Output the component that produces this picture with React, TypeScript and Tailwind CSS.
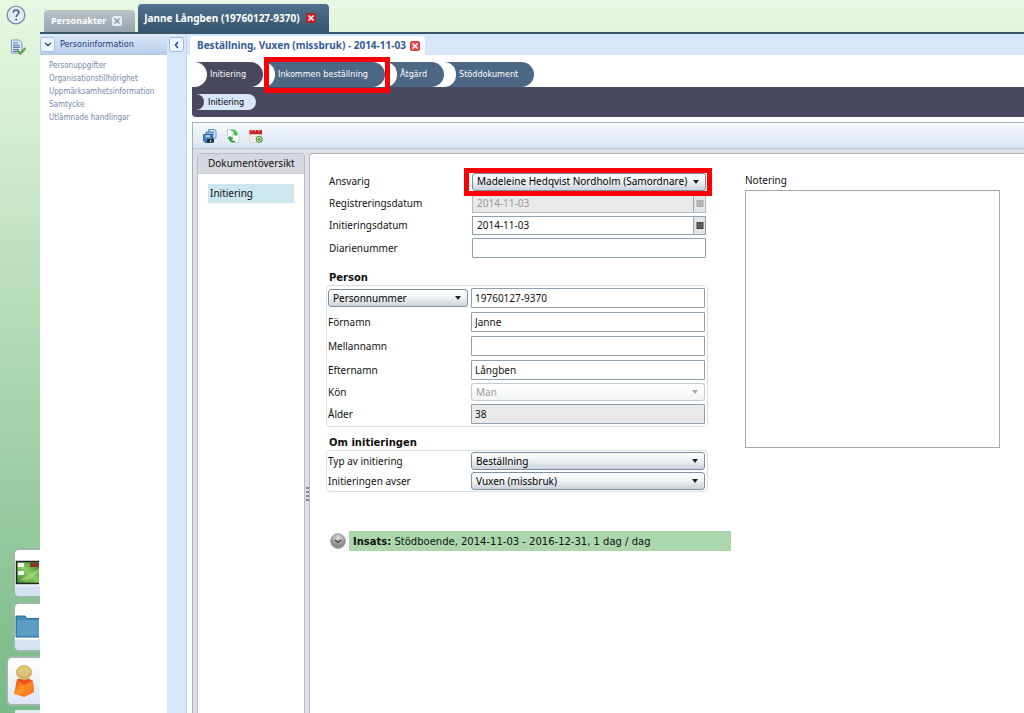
import type { ReactNode } from 'react';

const UI = "font-['DejaVu_Sans_Condensed','DejaVu_Sans',sans-serif]";

function CloseIcon({ cross, fill, stroke }: { cross: string; fill: string; stroke: string }) {
  return (
    <svg viewBox="0 0 10 10" className="size-[10px]" aria-hidden="true">
      <rect x=".5" y=".5" width="9" height="9" rx="1.5" fill={fill} stroke={stroke} />
      <path d="M2.500 2.500l5 5M7.500 2.500l-5 5" stroke={cross} strokeWidth="1.500" />
    </svg>
  );
}

function HelpIcon() {
  return (
    <svg viewBox="0 0 20 20" className="size-5" aria-hidden="true">
      <circle cx="10" cy="10" r="8.8" fill="#e3edf3" stroke="#7a8aad" strokeWidth="1.3" />
      <path d="M7.2 7.6C7.4 5.8 8.5 5 10 5c1.700 0 2.900.9 2.900 2.400 0 2-2.700 2.300-2.700 4.600" fill="none" stroke="#4a5b80" strokeWidth="1.500" />
      <circle cx="10.200" cy="14.400" r="1" fill="#4a5b80" />
    </svg>
  );
}

function ChecklistIcon() {
  return (
    <svg viewBox="0 0 16 16" className="size-4" aria-hidden="true">
      <path d="M1.500 1h7.500l3 3v10H1.500z" fill="#dfe9f5" stroke="#8296b5" />
      <path d="M3 4h5M3 6.200h7M3 8.400h7M3 10.600h6M3 12.500h4" stroke="#4f78b4" strokeWidth="1.100" />
      <path d="M7.500 11.500l3 3L15.500 9" fill="none" stroke="#5da653" strokeWidth="2.400" />
    </svg>
  );
}

function SaveAllIcon() {
  return (
    <svg viewBox="0 0 14 14" className="size-[14px]" aria-hidden="true">
      <path d="M5.500.5h6l1.500 1.500v7H5.500z" fill="#dceafa" stroke="#5584b8" strokeWidth=".9" />
      <path d="M7 1h4v2.500H7z" fill="#fff" stroke="#7ba3d0" strokeWidth=".6" />
      <path d="M3 3h7v7H3z" fill="#8fbbe8" stroke="#3a6aa5" strokeWidth=".9" />
      <path d="M.6 5.500h8.400v8H2.200L.6 12z" fill="#4381c4" stroke="#24507f" strokeWidth=".8" />
      <path d="M2.500 6h4.500v2.500H2.500z" fill="#a9cdf2" />
      <path d="M4 10h7v3.500H4z" fill="#1b2a3f" />
      <path d="M7 10.700h1.200v2.300H7z" fill="#c8d4e2" />
    </svg>
  );
}

function RefreshIcon() {
  return (
    <svg viewBox="0 0 14 14" className="size-[14px]" aria-hidden="true">
      <path d="M1.500.5H6l2 2v6H1.500z" fill="#fff" stroke="#b4c0d0" strokeWidth=".7" />
      <path d="M6.500 5h4.500l2 2v6.500H6.500z" fill="#fff" stroke="#b4c0d0" strokeWidth=".7" />
      <path d="M5 .8c3.500-.8 5.800.6 6.200 3.200h1.600L9.800 7.200 6.500 4h1.700C7.800 2.600 7 1.900 5 1.900z" fill="#4cc14c" />
      <path d="M9 13.200c-3.500.8-5.800-.6-6.200-3.200H1.200L4.200 6.800 7.500 10H5.800c.4 1.400 1.200 2.100 3.200 2.100z" fill="#35a63b" />
    </svg>
  );
}

function CalendarAddIcon() {
  return (
    <svg viewBox="0 0 14 14" className="size-[14px]" aria-hidden="true">
      <path d="M1 4h11v9H1z" fill="#fdf4f4" stroke="#dcb9b9" strokeWidth=".7" />
      <path d="M.5 1h12.500v4.300H.5z" fill="#c9242b" />
      <path d="M3 .3v2.200M6.500.3v2.200M10 .3v2.200" stroke="#f3c8c8" strokeWidth="1" />
      <path d="M3 7.500h1M6 7.500h1M3 10h1M5.500 10h1" stroke="#d3b3b3" />
      <circle cx="10.200" cy="10.300" r="2.900" fill="#f3fbf0" stroke="#5a9a4b" strokeWidth="1.200" />
      <path d="M8.600 10.300h3.200M10.200 8.700v3.200" stroke="#3d8a33" strokeWidth="1.200" />
    </svg>
  );
}

function Highlight({ children, className }: { children: ReactNode; className: string }) {
  return (
    <div className="relative">
      {children}
      <span aria-hidden="true" className={`pointer-events-none absolute z-10 border-[5px] border-[#fb0007] ${className}`} />
    </div>
  );
}

function StepTab({ label, className }: { label: string; className: string }) {
  return (
    <button
      type="button"
      className={`relative h-[25px] rounded-r-[14px] pt-px text-left text-[9px] text-white before:absolute before:top-0 before:left-0 before:h-full before:rounded-r-[13px] before:bg-white before:content-[''] ${className}`}
    >
      {label}
    </button>
  );
}

function TextInput({ id, value = '', className = 'bg-white' }: { id: string; value?: string; className?: string }) {
  return (
    <input
      id={id}
      type="text"
      defaultValue={value}
      className={`h-5 w-full rounded-[1px] border border-[#8fa1b0] px-[3px] ${className}`}
    />
  );
}

function Select({ id, value, disabled, label }: { id: string; value: string; disabled?: boolean; label?: string }) {
  return (
    <div className="relative w-full">
      <select
        id={id}
        aria-label={label}
        disabled={disabled}
        className="block h-[18px] w-full appearance-none overflow-hidden rounded-[3px] border border-[#7e8f9f] bg-linear-to-b from-white via-[#eef1f4] to-[#cbd2da] pr-4 pl-1 text-black disabled:border-[#c3cad0] disabled:via-[#fafbfb] disabled:to-[#f0f2f4] disabled:text-[#9a9a9a] disabled:opacity-100"
      >
        <option>{value}</option>
      </select>
      <svg viewBox="0 0 6 4" className="pointer-events-none absolute top-[7px] right-[7px] h-1 w-[6px]" aria-hidden="true">
        <path d="M0 0h6L3 4z" fill={disabled ? '#a6a6a6' : '#222'} />
      </svg>
    </div>
  );
}

function DateInput({ id, value, disabled }: { id: string; value: string; disabled?: boolean }) {
  return (
    <div className={`flex h-[19px] w-full border ${disabled ? 'border-[#b4bcc4] bg-[#e9e9e9] text-[#9a9a9a]' : 'border-[#8fa1b0] bg-white'}`}>
      <input id={id} type="text" defaultValue={value} disabled={disabled} className="min-w-0 flex-1 px-1" />
      <button
        type="button"
        disabled={disabled}
        aria-label="Välj datum"
        className="flex w-3 items-center justify-center border-l border-[#9aa8b4] bg-[#e2e5e8]"
      >
        <svg viewBox="0 0 8 7" className="h-[7px] w-2" aria-hidden="true">
          <path d="M.5 0h7v7h-7z" fill={disabled ? '#a5a5a5' : '#3a3a3a'} />
          <path d="M0 2.300h8M0 4.600h8M2.800 0v7M5.200 0v7" stroke={disabled ? '#d0d0d0' : '#999'} strokeWidth=".5" />
        </svg>
      </button>
    </div>
  );
}

function Row({ id, label, className, children }: { id: string; label: string; className: string; children: ReactNode }) {
  return (
    <div className={`grid grid-cols-[143px_234px] items-center ${className}`}>
      <label htmlFor={id}>{label}</label>
      {children}
    </div>
  );
}

function RailCard({ label, className, children }: { label: string; className: string; children?: ReactNode }) {
  return (
    <button
      type="button"
      aria-label={label}
      className={`flex h-[50px] shrink-0 items-center overflow-hidden rounded-l-md border-2 border-r-0 border-[#9db8ab] ${className}`}
    >
      {children}
    </button>
  );
}

const personLinks = [
  'Personuppgifter',
  'Organisationstillhörighet',
  'Uppmärksamhetsinformation',
  'Samtycke',
  'Utlämnade handlingar',
];

export default function App() {
  return (
    <div className={`flex h-screen overflow-hidden bg-linear-to-b from-[#e6f8e1] to-[#78b985] text-[9px] text-[#111] ${UI}`}>
      <aside className="flex w-10 shrink-0 flex-col items-end">
        <button type="button" aria-label="Hjälp" className="mt-[5px] mr-[14px]">
          <HelpIcon />
        </button>
        <button type="button" aria-label="Checklista" className="mt-[14px] mr-[14px]">
          <ChecklistIcon />
        </button>
        <div className="mt-auto flex flex-col items-end gap-1">
          <RailCard label="Skrivbord" className="w-[27px] bg-linear-to-b from-white from-75% to-[#d5e2f2] to-80%">
            <svg viewBox="0 0 24 26" className="h-[26px] w-6" aria-hidden="true">
              <defs>
                <linearGradient id="desk" x1="0" y1="1" x2="1" y2="0">
                  <stop offset="0" stopColor="#3f8a2c" />
                  <stop offset=".5" stopColor="#8ccc62" />
                  <stop offset="1" stopColor="#2e7426" />
                </linearGradient>
              </defs>
              <path d="M1.500 1.500h25v22h-25z" fill="url(#desk)" stroke="#222" strokeWidth="1.500" />
              <path d="M3 3h6v4H3zM3 11h6v4H3z" fill="#f2f6f0" />
              <path d="M15 3h9v4h-9z" fill="#8e3226" />
              <path d="M5 20L24 9v3L12 21z" fill="#b6e192" opacity=".5" />
            </svg>
          </RailCard>
          <RailCard label="Mappar" className="w-[27px] bg-linear-to-b from-white from-75% to-[#d5e2f2] to-80%">
            <svg viewBox="0 0 24 26" className="h-[26px] w-6" aria-hidden="true">
              <path d="M1 2h9l2 2.500h14V23H1z" fill="#4389b6" stroke="#2f6d98" />
              <path d="M2 6h24v16H2z" fill="#5a9cc6" />
            </svg>
          </RailCard>
          <RailCard label="Personer" className="w-[34px] justify-center bg-linear-to-b from-white to-[#dce6f3]">
            <svg viewBox="0 0 24 34" className="h-[34px] w-6" aria-hidden="true">
              <defs>
                <linearGradient id="body" x1="0" y1="0" x2="1" y2="1">
                  <stop offset="0" stopColor="#e34a14" />
                  <stop offset=".5" stopColor="#ff9a28" />
                  <stop offset="1" stopColor="#e8480e" />
                </linearGradient>
              </defs>
              <path d="M5 15h12l4 2 1 11-10 5-10-3z" fill="url(#body)" />
              <path d="M5 15h12l4 2-9 4z" fill="#ee4f1c" />
              <path d="M12 21l9-4 1 11-10 5z" fill="#ff8222" opacity=".7" />
              <ellipse cx="12" cy="8.500" rx="8" ry="7.500" fill="#d4b566" />
              <ellipse cx="12" cy="7" rx="6" ry="5" fill="#dfc47a" />
            </svg>
          </RailCard>
          <div className="h-[3px] w-[25px] bg-[#e4ecf2]" />
        </div>
      </aside>

      <div className="flex min-w-0 flex-1 flex-col">
        <header className="flex h-8 shrink-0 items-end gap-[3px] pl-1 font-bold text-white">
          <div className="flex h-[22px] items-center gap-[6px] rounded-t bg-linear-to-b from-[#bcc3c9] to-[#98a4ae] pr-[13px] pl-[7px] font-['Noto_Sans',sans-serif] text-[9px]">
            <a href="#personakter">Personakter</a>
            <button type="button" aria-label="Stäng Personakter">
              <CloseIcon fill="#e9ecee" stroke="#e9ecee" cross="#8e98a2" />
            </button>
          </div>
          <div className="flex h-7 items-center gap-[6px] rounded-t bg-linear-to-b from-[#50708d] to-[#36566f] pr-[13px] pl-[6px] font-['Noto_Sans',sans-serif] text-[10px]">
            <a href="#janne">Janne Långben (19760127-9370)</a>
            <button type="button" aria-label="Stäng Janne Långben">
              <CloseIcon fill="#d51f2b" stroke="#b01825" cross="#fff" />
            </button>
          </div>
        </header>

        <div className="flex min-h-0 flex-1 border-t-2 border-[#365569] bg-[#d8e6f9]">
          <nav className="w-[127px] shrink-0 bg-white">
            <div className="flex h-[21px] items-center gap-[5px] border-b border-[#b5c8e2] bg-linear-to-b from-[#dce9f9] to-[#b7cdec]">
              <button type="button" aria-label="Fäll ihop" className="flex size-[15px] items-center justify-center rounded-[3px] border border-[#a9c0df] bg-[#eff5fd]">
                <svg viewBox="0 0 8 5" className="h-[5px] w-2" aria-hidden="true">
                  <path d="M1 1l3 2.500L7 1" fill="none" stroke="#35496c" strokeWidth="1.500" />
                </svg>
              </button>
              <h2 className="pt-[2px] text-[#1d3d70]">Personinformation</h2>
            </div>
            <ul className="flex flex-col pt-1 pl-[9px] text-[8px] leading-[13px] text-[#7388ab]">
              {personLinks.map((text) => (
                <li key={text}>
                  <a href="#person">{text}</a>
                </li>
              ))}
            </ul>
          </nav>

          <div className="flex w-5 shrink-0 justify-center border-r border-[#c4d3e6] pt-[3px]">
            <button type="button" aria-label="Dölj panel" className="flex size-[15px] items-center justify-center rounded-[3px] border border-[#9db9e0] bg-[#eff5fd]">
              <svg viewBox="0 0 5 8" className="h-2 w-[5px]" aria-hidden="true">
                <path d="M4 1L1.500 4 4 7" fill="none" stroke="#21509a" strokeWidth="1.600" />
              </svg>
            </button>
          </div>

          <main className="flex min-w-0 flex-1 flex-col">
            <div className="flex h-[21px] shrink-0 items-end pl-[3px]">
              <div className="flex h-[19px] items-center gap-1 rounded-t bg-white pr-[5px] pl-[7px] font-['Noto_Sans',sans-serif] text-[10px] font-bold text-[#365b96]">
                <h1>Beställning, Vuxen (missbruk) - 2014-11-03</h1>
                <button type="button" aria-label="Stäng Beställning">
                  <CloseIcon fill="#e94b49" stroke="#d83c3c" cross="#fff" />
                </button>
              </div>
            </div>

            <div className="flex min-h-0 flex-1 flex-col bg-white pl-[5px]">
              <div className="mt-[7px] flex">
                <StepTab label="Initiering" className="w-[71px] bg-[#48495e] pl-[18px] before:w-[15px]" />
                <Highlight className="-top-[5px] -right-[5px] -bottom-[6px] left-px">
                  <StepTab label="Inkommen beställning" className="w-[122px] bg-[#4c6784] pl-[15px] before:w-3" />
                </Highlight>
                <StepTab label="Åtgärd" className="w-[59px] bg-[#4c6784] pl-[15px] before:w-3" />
                <StepTab label="Stöddokument" className="w-[90px] bg-[#4c6784] pl-[15px] before:w-3" />
              </div>
              <div className="flex h-[30px] shrink-0 items-center rounded-bl-sm bg-[#48495e] pl-1">
                <button
                  type="button"
                  className="relative h-4 w-[60px] rounded-r-full bg-[#d9e5f8] pt-px pl-[12px] text-left text-[9px] text-black before:absolute before:top-0 before:left-0 before:h-full before:w-2 before:rounded-r-full before:bg-[#48495e] before:content-['']"
                >
                  Initiering
                </button>
              </div>

              <div className="mt-[5px] flex min-h-0 flex-1 flex-col border-t border-l border-[#aaaeb4] bg-[#dcdfe6]">
                <div className="flex h-[26px] shrink-0 items-center gap-[9px] border-b border-[#bfc5ce] bg-linear-to-b from-[#f6f9fd] to-[#dbe5f2] pt-px pl-[10px]">
                  <button type="button" aria-label="Spara"><SaveAllIcon /></button>
                  <button type="button" aria-label="Uppdatera"><RefreshIcon /></button>
                  <button type="button" aria-label="Lägg till i kalender"><CalendarAddIcon /></button>
                </div>

                <div className="flex min-h-0 flex-1 pt-[4px] pl-1 font-['Noto_Sans',sans-serif] text-[10px]">
                  <section className="w-[108px] shrink-0 rounded-t-sm border border-b-0 border-[#b9bdc5] bg-white">
                    <h2 className="flex h-5 items-center border-b border-[#c9ccd4] bg-[#d6d7df] pl-[10px]">Dokumentöversikt</h2>
                    <a href="#initiering" className="mx-[10px] mt-[10px] flex h-[19px] items-center bg-[#cbe7f0] pl-[2px]">
                      Initiering
                    </a>
                  </section>
                  <div className="flex w-1 shrink-0 flex-col items-center pt-[334px]">
                    <svg viewBox="0 0 3 15" className="h-[15px] w-[3px]" aria-hidden="true">
                      <path d="M0 1h3M0 5h3M0 9h3M0 13h3" stroke="#69707a" strokeWidth="1.500" />
                    </svg>
                  </div>

                  <form className="flex min-w-0 flex-1 items-start gap-[37px] overflow-hidden rounded-tl-sm border-t border-l border-[#b4b7bd] bg-white pl-4">
                    <div className="flex w-[382px] shrink-0 flex-col">
                      <div className="flex flex-col pt-[17px] pl-[3px]">
                        <Row id="ansvarig" label="Ansvarig" className="h-[21px]">
                          <Highlight className="-top-[5px] -right-[6px] -bottom-[5px] -left-2">
                            <Select id="ansvarig" value="Madeleine Hedqvist Nordholm (Samordnare)" />
                          </Highlight>
                        </Row>
                        <Row id="regdatum" label="Registreringsdatum" className="h-[22px]">
                          <DateInput id="regdatum" value="2014-11-03" disabled />
                        </Row>
                        <Row id="initdatum" label="Initieringsdatum" className="h-[22px]">
                          <DateInput id="initdatum" value="2014-11-03" />
                        </Row>
                        <Row id="diarienummer" label="Diarienummer" className="h-6">
                          <TextInput id="diarienummer" />
                        </Row>
                      </div>

                      <h3 className="pt-[10px] pl-[3px] font-['DejaVu_Sans',sans-serif] text-[10px] leading-[15px] font-bold">Person</h3>
                      <div className="rounded border border-[#d5dfe4] px-px">
                        <div className="grid h-6 grid-cols-[143px_234px] items-center">
                          <div className="w-[140px]">
                            <Select id="idtyp" value="Personnummer" label="Typ av identitet" />
                          </div>
                          <TextInput id="personnummer" value="19760127-9370" />
                        </div>
                        <Row id="fornamn" label="Förnamn" className="h-6"><TextInput id="fornamn" value="Janne" /></Row>
                        <Row id="mellannamn" label="Mellannamn" className="h-6"><TextInput id="mellannamn" /></Row>
                        <Row id="efternamn" label="Efternamn" className="h-6"><TextInput id="efternamn" value="Långben" /></Row>
                        <Row id="kon" label="Kön" className="h-5"><Select id="kon" value="Man" disabled /></Row>
                        <Row id="alder" label="Ålder" className="h-6"><TextInput id="alder" value="38" className="bg-[#e9e9e9]" /></Row>
                      </div>

                      <h3 className="pt-2 pl-[3px] font-['DejaVu_Sans',sans-serif] text-[10px] leading-[15px] font-bold">Om initieringen</h3>
                      <div className="rounded border border-[#d5dfe4] px-px">
                        <Row id="typ" label="Typ av initiering" className="h-5"><Select id="typ" value="Beställning" /></Row>
                        <Row id="avser" label="Initieringen avser" className="h-5"><Select id="avser" value="Vuxen (missbruk)" /></Row>
                      </div>

                      <div className="mt-[39px] flex w-[405px] items-center gap-[3px] pl-1">
                        <button type="button" aria-label="Visa insats" className="shrink-0">
                          <svg viewBox="0 0 16 16" className="size-4" aria-hidden="true">
                            <defs>
                              <radialGradient id="knob" cx=".5" cy=".3">
                                <stop offset="0" stopColor="#e0e0e0" />
                                <stop offset="1" stopColor="#8b8b8b" />
                              </radialGradient>
                            </defs>
                            <circle cx="8" cy="8" r="7.500" fill="url(#knob)" stroke="#9c9c9c" strokeWidth=".6" />
                            <path d="M5 7l3 2.500L11 7" fill="none" stroke="#444" strokeWidth="1.600" />
                          </svg>
                        </button>
                        <p className="flex h-5 flex-1 items-center bg-[#abd7ab] pl-1 font-['DejaVu_Sans',sans-serif] whitespace-pre">
                          <b>Insats:</b> Stödboende, 2014-11-03 - 2016-12-31, 1 dag / dag
                        </p>
                      </div>
                    </div>

                    <div className="flex w-[255px] shrink-0 flex-col pt-[17px]">
                      <label htmlFor="notering" className="leading-[19px]">Notering</label>
                      <textarea id="notering" className="h-[258px] w-full resize-none border border-[#a3aab2] bg-white p-1" />
                    </div>
                  </form>
                </div>
              </div>
            </div>
          </main>
        </div>
      </div>
    </div>
  );
}
